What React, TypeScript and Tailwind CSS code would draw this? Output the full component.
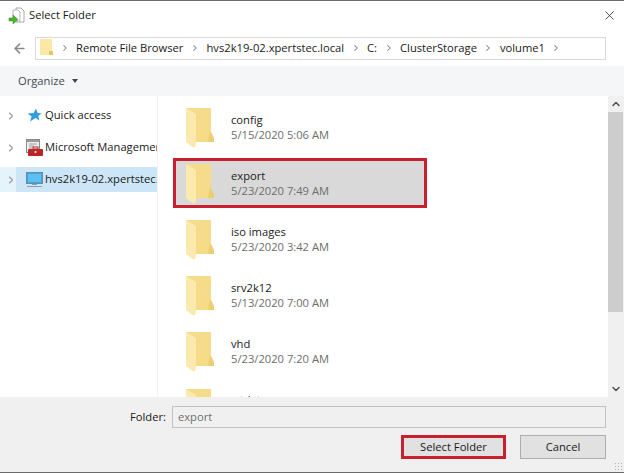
import React from 'react';
import { ArrowLeft, ChevronDown, ChevronRight, ChevronUp, X } from 'lucide-react';

const crumbs = ['Remote File Browser', 'hvs2k19-02.xpertstec.local', 'C:', 'ClusterStorage', 'volume1'];

const folders = [
  { name: 'config', date: '5/15/2020 5:06 AM' },
  { name: 'export', date: '5/23/2020 7:49 AM', selected: true },
  { name: 'iso images', date: '5/23/2020 3:42 AM' },
  { name: 'srv2k12', date: '5/13/2020 7:00 AM' },
  { name: 'vhd', date: '5/23/2020 7:20 AM' },
];

function FolderIcon() {
  return (
    <svg width="28" height="40" viewBox="0 0 28 40" className="shrink-0">
      <path d="M1 0 L25 0 L25 29 L1 29 Z" fill="#f3dc8c" />
      <path d="M10 6 L25 1 L25 24 L28 30 L28 34 L10 34 Z" fill="#f6dc88" />
      <path d="M24 23 L28 30 L28 34 L22 34 Z" fill="#eccd72" />
      <path d="M0 0 L10 6 L10 37 L8 40 L0 34 Z" fill="#fbeaae" />
    </svg>
  );
}

function SmallFolder() {
  return (
    <svg width="13" height="18" viewBox="0 0 13 18">
      <path d="M0 0 H12 V16 H0 Z" fill="#fbe7a6" />
      <path d="M9 12 H13 V16 H9 Z" fill="#e9c566" />
    </svg>
  );
}

function AppIcon() {
  return (
    <svg width="17" height="17" viewBox="0 0 17 17">
      <path d="M8 1 H13 L16 4 V15 H8 Z" fill="#fff" stroke="#a8a8a8" />
      <path d="M5 3 H10 L12 5 V14 H5 Z" fill="#fff" stroke="#b8b8b8" />
      <path d="M1 11 H5 V8 L10 12.5 L5 17 V14 H1 Z" fill="#4fb52e" stroke="#2f8a1a" strokeWidth="0.5" />
    </svg>
  );
}

function StarIcon() {
  return (
    <svg width="15" height="15" viewBox="0 0 15 15">
      <path d="M9 0.5 L10.6 5 L14.5 5.2 L11.3 8 L12.4 12.5 L8.6 10 L3 13.5 L4.6 8.6 L0.6 5.6 L6.6 5 Z" fill="#2f9fe4" />
    </svg>
  );
}

function MmcIcon() {
  return (
    <svg width="18" height="18" viewBox="0 0 18 18">
      <rect x="0.5" y="0.5" width="13" height="13" fill="#eee" stroke="#8a8a8a" />
      <rect x="1" y="1" width="12" height="2" fill="#9a9a9a" />
      <path d="M3 5 H11 M3 7 H8 M3 9 H6" stroke="#a0a0a0" />
      <rect x="2" y="10" width="15" height="7" rx="1" fill="#b8262a" />
      <rect x="7" y="8" width="5" height="2" fill="none" stroke="#b8262a" />
      <rect x="8.5" y="12" width="2" height="2" fill="#f3c9c9" />
    </svg>
  );
}

function MonitorIcon() {
  return (
    <svg width="17" height="17" viewBox="0 0 17 17">
      <rect x="0.5" y="1.5" width="16" height="11" fill="#3aa7e6" stroke="#6e8ba0" />
      <rect x="2" y="3" width="13" height="8" fill="#5cc0f2" />
      <rect x="6" y="13" width="5" height="1" fill="#8aa0b0" />
      <rect x="1" y="15" width="15" height="1" fill="#8aa0b0" />
    </svg>
  );
}

function TreeRow({ icon, label, active }: { icon: React.ReactNode; label: string; active?: boolean }) {
  return (
    <div className={`flex h-[25px] items-center ${active ? 'bg-[linear-gradient(90deg,#e5f3fb_16px,#cde6f7_16px)]' : ''}`}>
      <ChevronRight className="ml-[5px] w-3 h-3 text-[#9c9c9c] shrink-0" strokeWidth={2.25} />
      <div className="ml-[7px] flex w-[21px] justify-center shrink-0">{icon}</div>
      <span className="whitespace-nowrap overflow-hidden">{label}</span>
    </div>
  );
}

function App() {
  return (
    <div className="flex h-[473px] w-[624px] flex-col overflow-hidden bg-white font-['Open_Sans','Noto_Sans',sans-serif] text-[11.2px] text-[#1a1a1a]">
      <div className="h-[1px] shrink-0 bg-[#6a6a6a]" />

      {/* title bar */}
      <div className="flex h-[29px] shrink-0 items-center pl-[8px] pr-[7px]">
        <AppIcon />
        <span className="ml-[4px]">Select Folder</span>
        <X className="ml-auto h-[15px] w-[15px] text-[#222]" strokeWidth={1.25} />
      </div>

      {/* address bar */}
      <div className="flex h-[36px] shrink-0 items-center">
        <ArrowLeft className="ml-[12px] h-[15px] w-[15px] text-[#8a8a8a]" strokeWidth={2.5} />
        <div className="ml-[8px] flex h-[23px] w-[571px] items-center border border-[#d9d9d9] pl-[4px]">
          <SmallFolder />
          {crumbs.map((crumb) => (
            <React.Fragment key={crumb}>
              <ChevronRight className="mx-[6.5px] h-[10px] w-[10px] text-[#808080]" strokeWidth={2.5} />
              <span className="whitespace-nowrap">{crumb}</span>
            </React.Fragment>
          ))}
          <ChevronRight className="mx-[6.5px] h-[10px] w-[10px] text-[#808080]" strokeWidth={2.5} />
        </div>
      </div>

      {/* toolbar */}
      <div className="flex h-[30px] shrink-0 items-center bg-[#f5f6f7] pl-[18px] text-[#404a55]">
        <span>Organize</span>
        <span className="ml-[7px] h-0 w-0 border-x-[3.5px] border-t-[4px] border-x-transparent border-t-[#3c4650]" />
      </div>

      {/* panes */}
      <div className="flex min-h-0 flex-1">
        <div className="w-[158px] shrink-0 border-r border-[#f2f2f2] pt-[7px]">
          <div className="flex flex-col gap-[7px]">
            <TreeRow icon={<StarIcon />} label="Quick access" />
            <TreeRow icon={<MmcIcon />} label="Microsoft Management Console" />
            <TreeRow icon={<MonitorIcon />} label="hvs2k19-02.xpertstec.local" active />
          </div>
        </div>

        <div className="min-w-0 flex-1 overflow-hidden pl-[15px] pt-[6px]">
          <div className="flex flex-col gap-[6px]">
            {folders.map((folder) => (
              <div
                key={folder.name}
                className={`flex h-[50px] w-[254px] items-center pl-[13px] ${
                  folder.selected ? 'outline-[3px] -outline-offset-3 outline-[#c8202f] bg-[#d9d9d9]' : ''
                }`}
              >
                <div className="mt-[2px]">
                  <FolderIcon />
                </div>
                <div className="ml-[17px] leading-[15px]">
                  <div>{folder.name}</div>
                  <div className="text-[#6d6d6d]">{folder.date}</div>
                </div>
              </div>
            ))}
            <div className="flex h-[50px] items-start pl-[13px]">
              <div className="mt-[7px]">
                <FolderIcon />
              </div>
              <span className="ml-[17px] mt-[10px]">wtdata</span>
            </div>
          </div>
        </div>

        {/* scrollbar */}
        <div className="flex w-[16px] shrink-0 flex-col bg-[#f0f0f0]">
          <div className="flex h-[16px] items-center justify-center">
            <ChevronUp className="h-[12px] w-[12px] text-[#505050]" strokeWidth={3} />
          </div>
          <div className="mr-[1px] h-[200px] bg-[#cdcdcd]" />
          <div className="mt-auto flex h-[16px] items-center justify-center">
            <ChevronDown className="h-[12px] w-[12px] text-[#505050]" strokeWidth={3} />
          </div>
        </div>
      </div>

      {/* footer */}
      <div className="relative h-[75px] shrink-0 bg-[#f0f0f0]">
        <div className="flex pt-[9px] pr-[18px]">
          <span className="ml-[130px] self-center">Folder:</span>
          <div className="ml-[6px] flex h-[22px] flex-1 items-center border border-[#c4c4c4] pl-[5px] text-[#707070]">
            export
          </div>
        </div>
        <div className="mt-[7px] flex justify-end pr-[18px]">
          <button className="mr-[14px] h-[24px] w-[105px] border-[3px] border-[#c8202f] bg-[#e1e1e1]">
            Select Folder
          </button>
          <button className="h-[24px] w-[86px] border border-[#adadad] bg-[#e1e1e1]">Cancel</button>
        </div>
        <div className="absolute bottom-[2px] right-[2px] h-[8px] w-[8px] bg-[radial-gradient(#b0b0b0_1px,transparent_1px)] bg-[length:3px_3px]" />
      </div>

      <div className="h-[1px] shrink-0 bg-[#6a6a6a]" />
    </div>
  );
}

export default App;
